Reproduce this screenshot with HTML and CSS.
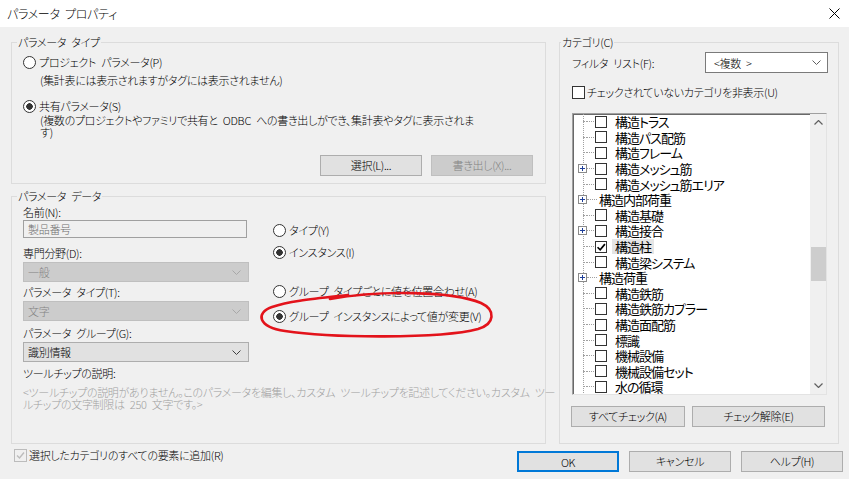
FILE: index.html
```html
<!DOCTYPE html>
<html lang="ja">
<head>
    <meta charset="UTF-8">
    <title>パラメータ プロパティ</title>
    <link rel="stylesheet" href="styles.css">
</head>
<body>
    <div class="titlebar">
        <span class="title">パラメータ プロパティ</span>
        <svg class="close" width="11" height="11" viewBox="0 0 11 11"><path d="M0.5 0.5L10.5 10.5M10.5 0.5L0.5 10.5" stroke="#000" stroke-width="1"/></svg>
    </div>

    <div class="main">
        <div class="left">
            <!-- parameter type -->
            <fieldset class="group">
                <legend>パラメータ タイプ</legend>
                <div class="body type-body">
                    <div class="radio"><span class="rb"></span>プロジェクト パラメータ(P)</div>
                    <p class="note first">(集計表には表示されますがタグには表示されません)</p>
                    <div class="radio shared"><span class="rb on"></span>共有パラメータ(S)</div>
                    <p class="note tight">(複数のプロジェクトやファミリで共有と ODBC への書き出しができ、集計表やタグに表示されま<br>す)</p>
                    <div class="btn-row">
                        <button class="btn">選択(L)...</button>
                        <button class="btn" disabled>書き出し(X)...</button>
                    </div>
                </div>
            </fieldset>

            <!-- parameter data -->
            <fieldset class="group data-group">
                <legend>パラメータ データ</legend>
                <div class="body data-body">
                    <div class="data-grid">
                        <div class="fields">
                            <div class="label name-label">名前(N):</div>
                            <div class="textbox">製品番号</div>
                            <div class="label gap8">専門分野(D):</div>
                            <div class="combo disabled"><span>一般</span><svg class="chev" width="9" height="5" viewBox="0 0 9 5"><path d="M0.5 0.5L4.5 4.5L8.5 0.5" fill="none" stroke="#a8a8a8"/></svg></div>
                            <div class="label gap3">パラメータ タイプ(T):</div>
                            <div class="combo disabled"><span>文字</span><svg class="chev" width="9" height="5" viewBox="0 0 9 5"><path d="M0.5 0.5L4.5 4.5L8.5 0.5" fill="none" stroke="#a8a8a8"/></svg></div>
                            <div class="label gap5">パラメータ グループ(G):</div>
                            <div class="combo"><span>識別情報</span><svg class="chev" width="9" height="5" viewBox="0 0 9 5"><path d="M0.5 0.5L4.5 4.5L8.5 0.5" fill="none" stroke="#404040"/></svg></div>
                        </div>
                        <div class="options">
                            <div class="radio opt-type"><span class="rb"></span>タイプ(Y)</div>
                            <div class="radio opt-inst"><span class="rb on"></span>インスタンス(I)</div>
                            <div class="radio opt-align"><span class="rb"></span>グループ タイプごとに値を位置合わせ(A)</div>
                            <div class="radio opt-vary"><span class="rb on"></span>グループ インスタンスによって値が変更(V)</div>
                        </div>
                    </div>
                    <div class="label gap4">ツールチップの説明:</div>
                    <p class="tooltip-text">&lt;ツールチップの説明がありません。このパラメータを編集し、カスタム ツールチップを記述してください。カスタム ツー<br>ルチップの文字制限は 250 文字です。&gt;</p>
                </div>
            </fieldset>
        </div>

        <!-- categories -->
        <fieldset class="group cat-group">
            <legend>カテゴリ(C)</legend>
            <div class="body cat-body">
                <div class="filter-row">
                    <span>フィルタ リスト(F):</span>
                    <div class="combo white"><span>&lt;複数 &gt;</span><svg class="chev" width="9" height="5" viewBox="0 0 9 5"><path d="M0.5 0.5L4.5 4.5L8.5 0.5" fill="none" stroke="#606060"/></svg></div>
                </div>
                <div class="check-row"><span class="cb"></span>チェックされていないカテゴリを非表示(U)</div>

                <div class="tree-box">
                    <div class="tree">
                        <div class="node"><span class="exp leaf"></span><span class="branch"></span><span class="cb"></span><span class="text">構造トラス</span></div>
                        <div class="node"><span class="exp leaf"></span><span class="branch"></span><span class="cb"></span><span class="text">構造パス配筋</span></div>
                        <div class="node"><span class="exp leaf"></span><span class="branch"></span><span class="cb"></span><span class="text">構造フレーム</span></div>
                        <div class="node"><span class="exp plus"></span><span class="branch"></span><span class="cb"></span><span class="text">構造メッシュ筋</span></div>
                        <div class="node"><span class="exp leaf"></span><span class="branch"></span><span class="cb"></span><span class="text">構造メッシュ筋エリア</span></div>
                        <div class="node head"><span class="exp plus"></span><span class="branch"></span><span class="text">構造内部荷重</span></div>
                        <div class="node"><span class="exp leaf"></span><span class="branch"></span><span class="cb"></span><span class="text">構造基礎</span></div>
                        <div class="node"><span class="exp plus"></span><span class="branch"></span><span class="cb"></span><span class="text">構造接合</span></div>
                        <div class="node"><span class="exp leaf"></span><span class="branch"></span><span class="cb checked"></span><span class="text selected">構造柱</span></div>
                        <div class="node"><span class="exp leaf"></span><span class="branch"></span><span class="cb"></span><span class="text">構造梁システム</span></div>
                        <div class="node head"><span class="exp plus"></span><span class="branch"></span><span class="text">構造荷重</span></div>
                        <div class="node"><span class="exp leaf"></span><span class="branch"></span><span class="cb"></span><span class="text">構造鉄筋</span></div>
                        <div class="node"><span class="exp leaf"></span><span class="branch"></span><span class="cb"></span><span class="text">構造鉄筋カプラー</span></div>
                        <div class="node"><span class="exp leaf"></span><span class="branch"></span><span class="cb"></span><span class="text">構造面配筋</span></div>
                        <div class="node"><span class="exp leaf"></span><span class="branch"></span><span class="cb"></span><span class="text">標識</span></div>
                        <div class="node"><span class="exp leaf"></span><span class="branch"></span><span class="cb"></span><span class="text">機械設備</span></div>
                        <div class="node"><span class="exp leaf"></span><span class="branch"></span><span class="cb"></span><span class="text">機械設備セット</span></div>
                        <div class="node"><span class="exp leaf"></span><span class="branch"></span><span class="cb"></span><span class="text">水の循環</span></div>
                    </div>
                    <div class="scrollbar">
                        <div class="arrow"><svg width="9" height="5" viewBox="0 0 9 5"><path d="M0.5 4.5L4.5 0.5L8.5 4.5" fill="none" stroke="#606060" stroke-width="1.2"/></svg></div>
                        <div class="track"><div class="thumb"></div></div>
                        <div class="arrow"><svg width="9" height="5" viewBox="0 0 9 5"><path d="M0.5 0.5L4.5 4.5L8.5 0.5" fill="none" stroke="#606060" stroke-width="1.2"/></svg></div>
                    </div>
                </div>

                <div class="cat-buttons">
                    <button class="btn all">すべてチェック(A)</button>
                    <button class="btn none">チェック解除(E)</button>
                </div>
            </div>
        </fieldset>
    </div>

    <div class="footer">
        <div class="check-row add-row"><span class="cb checked disabled"></span>選択したカテゴリのすべての要素に追加(R)</div>
        <div class="dialog-buttons">
            <button class="btn ok">OK</button>
            <button class="btn">キャンセル</button>
            <button class="btn">ヘルプ(H)</button>
        </div>
    </div>

    <!-- hand drawn red mark -->
    <svg class="mark" width="849" height="479" viewBox="0 0 849 479">
        <path d="M330 299 C380 290, 452 291, 481 303 C496 310, 495 324, 478 329 C440 339, 330 338, 285 331 C258 327, 255 313, 272 307 C290 301, 312 299, 348 295" fill="none" stroke="#e3131b" stroke-width="2.6" stroke-linecap="round"/>
    </svg>
</body>
</html>
```

FILE: styles.css
```css
* {
    box-sizing: border-box;
}
body {
    margin: 0;
    width: 849px;
    height: 479px;
    overflow: hidden;
    position: relative;
    background: #f0f0f0;
    color: #000;
    font-family: "Noto Sans CJK JP", "Noto Sans", sans-serif;
    font-size: 11px;
    font-weight: 300;
    letter-spacing: -0.3px;
    word-spacing: 3px;
    font-feature-settings: "palt" 1;
}
p {
    margin: 0;
}
.titlebar {
    height: 27px;
    background: #fff;
    display: flex;
    align-items: center;
    justify-content: space-between;
    padding: 0 9px 0 7px;
}
.title {
    font-size: 12px;
    line-height: 16px;
}
.main {
    display: flex;
    gap: 13px;
    padding: 7px 0 0 11px;
}
.left {
    width: 535px;
    display: flex;
    flex-direction: column;
    gap: 4px;
}
fieldset.group {
    margin: 0;
    padding: 0;
    min-width: 0;
    border: 1px solid #dcdcdc;
}
fieldset.group legend {
    padding: 0 1px;
    margin-left: 5px;
    line-height: 16px;
}
.type-body {
    padding: 4px 12px 7px 11px;
}
.radio {
    display: flex;
    align-items: center;
    height: 16px;
    line-height: 16px;
    white-space: nowrap;
}
.rb {
    width: 13px;
    height: 13px;
    border: 1px solid #333;
    border-radius: 50%;
    background: #fff;
    margin-right: 3px;
    flex: none;
}
.rb.on {
    background: radial-gradient(circle, #333 0 3px, #fff 3.5px);
}
.note {
    padding-left: 17px;
    line-height: 16px;
    white-space: nowrap;
}
.note.first {
    margin-top: 2px;
}
.radio.shared {
    margin-top: 10px;
}
.note.tight {
    line-height: 12px;
}
.btn-row {
    display: flex;
    justify-content: flex-end;
    gap: 9px;
    margin-top: 17px;
}
.btn {
    height: 21px;
    width: 102px;
    padding: 0;
    border: 1px solid #adadad;
    background: #e1e1e1;
    font: inherit;
    letter-spacing: inherit;
    word-spacing: inherit;
    color: #000;
    line-height: 19px;
}
.btn:disabled {
    background: #cccccc;
    border-color: #bfbfbf;
    color: #838383;
}
.btn.ok {
    border: 2px solid #0078d7;
}

/* parameter data */
.data-body {
    padding: 1px 11px 33px 11px;
}
.data-grid {
    display: grid;
    grid-template-columns: 226px 1fr;
    column-gap: 24px;
}
.label {
    line-height: 14px;
    white-space: nowrap;
}
.gap8 { margin-top: 8px; }
.gap3 { margin-top: 3px; }
.gap5 { margin-top: 5px; }
.gap4 { margin-top: 4px; }
.textbox {
    margin-top: 1px;
    width: 224px;
    height: 18px;
    border: 1px solid #a0a0a0;
    background: #f0f0f0;
    color: #6d6d6d;
    padding-left: 4px;
    line-height: 16px;
}
.combo {
    margin-top: 2px;
    height: 20px;
    display: flex;
    align-items: center;
    justify-content: space-between;
    padding: 0 7px 0 4px;
    border: 1px solid #adadad;
    background: #e1e1e1;
}
.combo.disabled {
    background: #cccccc;
    border-color: #bfbfbf;
    color: #838383;
}
.combo.white {
    margin-top: 0;
    width: 123px;
    height: 21px;
    background: #fff;
    border-color: #7a7a7a;
    padding: 0 6px 0 8px;
}
.options .radio {
    margin-top: 6px;
}
.options .opt-type {
    margin-top: 17px;
}
.options .opt-align {
    margin-top: 23px;
}
.options .opt-vary {
    margin-top: 9px;
}
.tooltip-text {
    margin-top: 6px;
    line-height: 12px;
    color: #a0a0a0;
    white-space: nowrap;
}

/* categories */
.cat-group {
    width: 280px;
    align-self: flex-start;
}
fieldset.cat-group legend {
    margin-left: 1px;
}
.cat-body {
    padding: 2px 10px 16px 12px;
}
.filter-row {
    display: flex;
    align-items: center;
    justify-content: space-between;
}
.check-row {
    display: flex;
    align-items: center;
    height: 16px;
    margin-top: 11px;
    white-space: nowrap;
}
.cb {
    width: 13px;
    height: 13px;
    border: 1px solid #333;
    background: #fff;
    margin-right: 2px;
    flex: none;
}
.cb.checked {
    background: #fff url("data:image/svg+xml;utf8,<svg xmlns='http://www.w3.org/2000/svg' width='11' height='11'><path d='M2 5.5L4.5 8L9 2.5' fill='none' stroke='%23000' stroke-width='1.6'/></svg>") center no-repeat;
}
.cb.checked.disabled {
    border-color: #bcbcbc;
    background-color: #f0f0f0;
    background-image: url("data:image/svg+xml;utf8,<svg xmlns='http://www.w3.org/2000/svg' width='11' height='11'><path d='M2 5.5L4.5 8L9 2.5' fill='none' stroke='%23bcbcbc' stroke-width='1.4'/></svg>");
}
.tree-box {
    margin-top: 13px;
    width: 255px;
    height: 282px;
    display: flex;
    background: #fff;
    border: 1px solid #a0a0a0;
    border-right-color: #e3e3e3;
    border-bottom-color: #e3e3e3;
    box-shadow: inset 1px 1px 0 #696969;
}
.tree {
    flex: 1;
    overflow: hidden;
    font-size: 13px;
    font-weight: 400;
    letter-spacing: -1px;
    background-image: repeating-linear-gradient(to bottom, #a0a0a0 0 1px, transparent 1px 2px);
    background-size: 1px 100%;
    background-position: 10px 0;
    background-repeat: no-repeat;
}
.node {
    height: 15.6px;
    display: flex;
    align-items: center;
    padding-left: 5px;
    white-space: nowrap;
}
.exp {
    width: 9px;
    height: 9px;
    flex: none;
    position: relative;
}
.exp.leaf::after {
    content: "";
    position: absolute;
    left: 5px;
    right: 0;
    top: 4px;
    border-top: 1px dotted #a0a0a0;
}
.exp.plus {
    border: 1px solid #8a8a8a;
    background: #fff url("data:image/svg+xml;utf8,<svg xmlns='http://www.w3.org/2000/svg' width='7' height='7'><path d='M1 3.5H6M3.5 1V6' stroke='%231f3f99' stroke-width='1'/></svg>") center no-repeat;
}
.branch {
    width: 7px;
    border-top: 1px dotted #a0a0a0;
    flex: none;
}
.node .cb {
    width: 12px;
    height: 12px;
    margin-left: 1px;
    margin-right: 0;
}
.node .text {
    margin-left: 8px;
    line-height: 15px;
}
.node .text.selected {
    margin-left: 5px;
    padding: 0 3px;
    background: #e5e5e5;
}
.node.head .branch {
    width: 10px;
}
.node.head .text {
    margin-left: 2px;
}
.scrollbar {
    width: 16px;
    display: flex;
    flex-direction: column;
    background: #f0f0f0;
}
.arrow {
    height: 17px;
    display: flex;
    align-items: center;
    justify-content: center;
}
.track {
    flex: 1;
}
.thumb {
    margin: 116px 0 0 1px;
    width: 15px;
    height: 34px;
    background: #cdcdcd;
}
.cat-buttons {
    display: flex;
    justify-content: space-between;
    margin-top: 11px;
    padding-right: 3px;
    margin-left: -1px;
}
.cat-buttons .all {
    width: 114px;
}
.cat-buttons .none {
    width: 133px;
}

/* footer */
.footer {
    display: flex;
    justify-content: space-between;
    align-items: flex-start;
    padding: 0 6px 0 14px;
    margin-top: 3px;
}
.add-row {
    margin-top: 0;
}
.dialog-buttons {
    display: flex;
    gap: 10px;
    margin-top: 4px;
}
.mark {
    position: absolute;
    left: 0;
    top: 0;
    pointer-events: none;
}
```
